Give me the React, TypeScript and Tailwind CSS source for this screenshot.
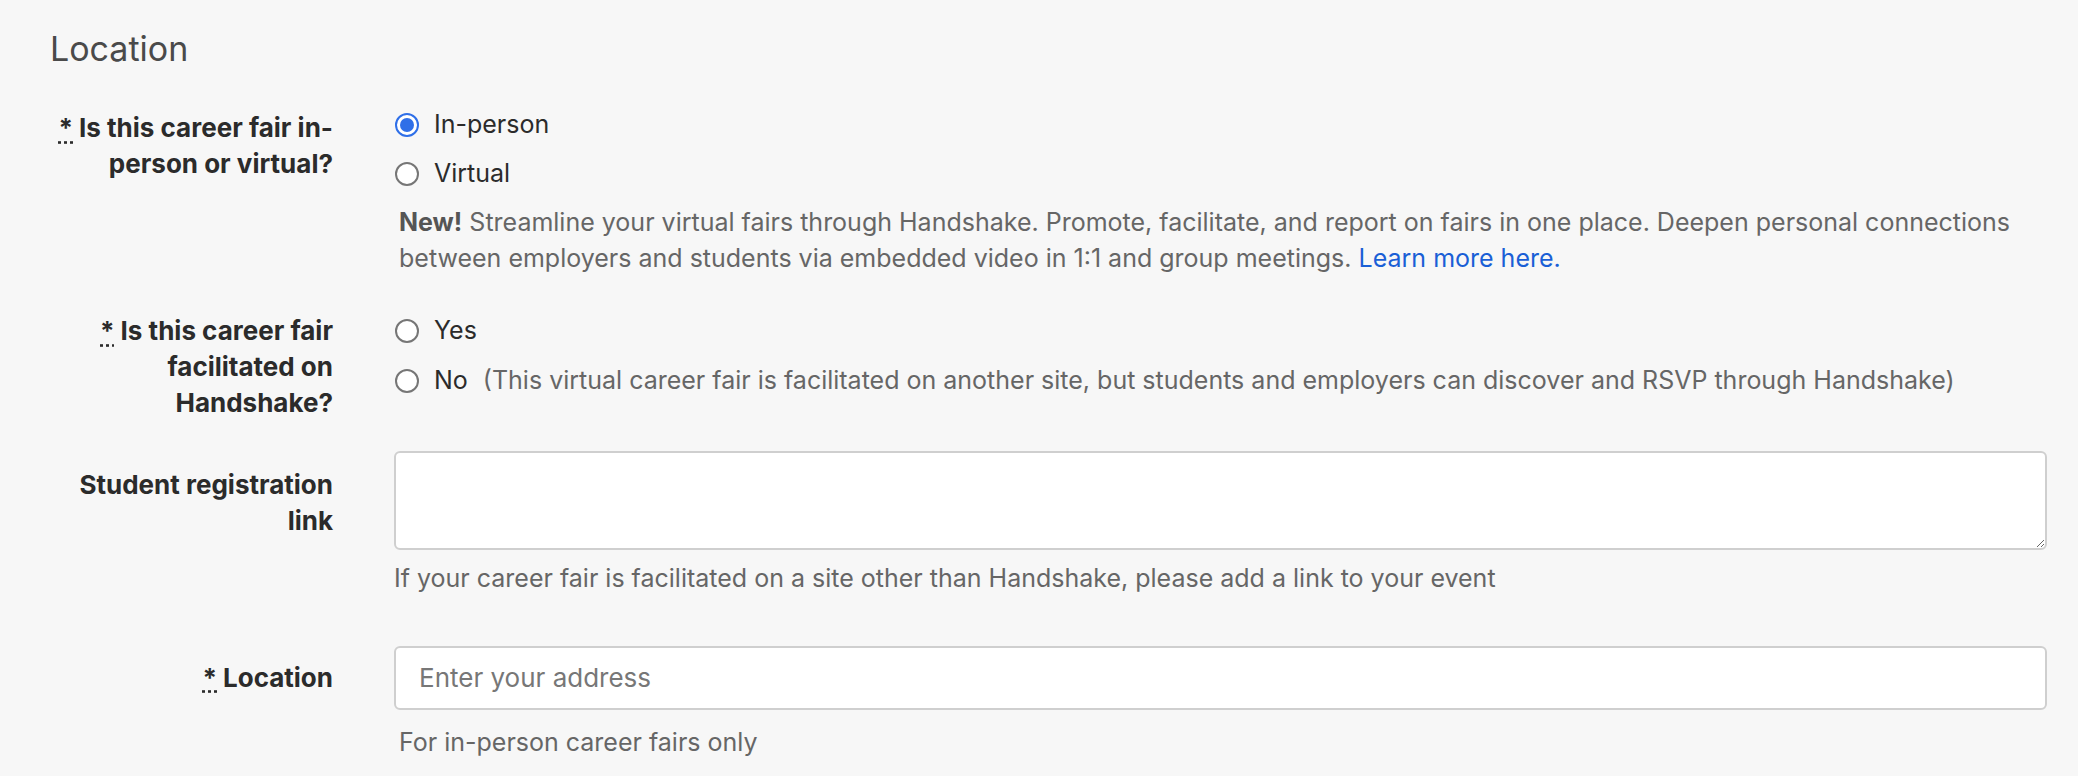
import React from "react";

const Radio = ({ checked, label, extra }: { checked?: boolean; label: string; extra?: string }) => (
  <label className="flex items-center h-[38px]">
    <span className={`w-[24px] h-[24px] rounded-full border-[2px] flex items-center justify-center bg-white ${checked ? "border-[#2f6fe8]" : "border-[#767676]"}`}>
      {checked && <span className="w-[14px] h-[14px] rounded-full bg-[#2f6fe8]" />}
    </span>
    <span className="ml-[15px] text-[25px] text-[#2b2b2b]">{label}</span>
    {extra && <span className="ml-[15px] text-[25px] text-[#666]">{extra}</span>}
  </label>
);

const Req = () => (
  <span className="underline decoration-dotted underline-offset-4 mr-[6px]">*</span>
);

export default function App() {
  return (
    <div className="w-[2078px] h-[776px] bg-[#f7f7f7] overflow-hidden" style={{ fontFamily: "Inter, 'Noto Sans', sans-serif" }}>
      <div className="pl-[50px] pt-[27px] text-[34px] text-[#4a4a4a] leading-[44px]">Location</div>

      <div className="flex mt-[39px]">
        <div className="w-[333px] text-right font-bold text-[26px] leading-[36px] text-[#2b2b2b]"><Req />Is this career fair in-<br />person or virtual?</div>
        <div className="ml-[62px] flex-1 pr-[30px]">
          <div className="-mt-[4px]"><Radio checked label="In-person" /></div>
          <div className="mt-[11px]"><Radio label="Virtual" /></div>
          <p className="ml-[4px] mt-[11px] text-[25px] leading-[36px] text-[#666]">
            <b className="text-[#555]">New!</b> Streamline your virtual fairs through Handshake. Promote, facilitate, and report on fairs in one place. Deepen personal connections<br />between employers and students via embedded video in 1:1 and group meetings. <span className="text-[#1a5fd6]">Learn more here.</span>
          </p>
        </div>
      </div>

      <div className="flex mt-[37px]">
        <div className="w-[333px] text-right font-bold text-[26px] leading-[36px] text-[#2b2b2b]"><Req />Is this career fair<br />facilitated on<br />Handshake?</div>
        <div className="ml-[62px] flex-1">
          <div className="-mt-[1px]"><Radio label="Yes" /></div>
          <div className="mt-[12px]"><Radio label="No" extra="(This virtual career fair is facilitated on another site, but students and employers can discover and RSVP through Handshake)" /></div>
        </div>
      </div>

      <div className="flex mt-[30px]">
        <div className="w-[333px] text-right font-bold text-[26px] leading-[36px] text-[#2b2b2b] pt-[16px]">Student registration<br />link</div>
        <div className="ml-[61px] w-[1653px]">
          <textarea className="block w-full h-[99px] bg-white border-[2px] border-[#cfcfcf] rounded-[6px]" />
          <div className="mt-[10px] text-[25px] text-[#666]">If your career fair is facilitated on a site other than Handshake, please add a link to your event</div>
        </div>
      </div>

      <div className="flex mt-[48px]">
        <div className="w-[333px] text-right font-bold text-[26px] leading-[64px] text-[#2b2b2b]"><Req />Location</div>
        <div className="ml-[61px] w-[1653px]">
          <input placeholder="Enter your address" className="block w-full h-[64px] bg-white border-[2px] border-[#cfcfcf] rounded-[6px] px-[23px] text-[26px] placeholder:text-[#777]" />
          <div className="mt-[14px] ml-[5px] text-[25px] text-[#666]">For in-person career fairs only</div>
        </div>
      </div>
    </div>
  );
}
